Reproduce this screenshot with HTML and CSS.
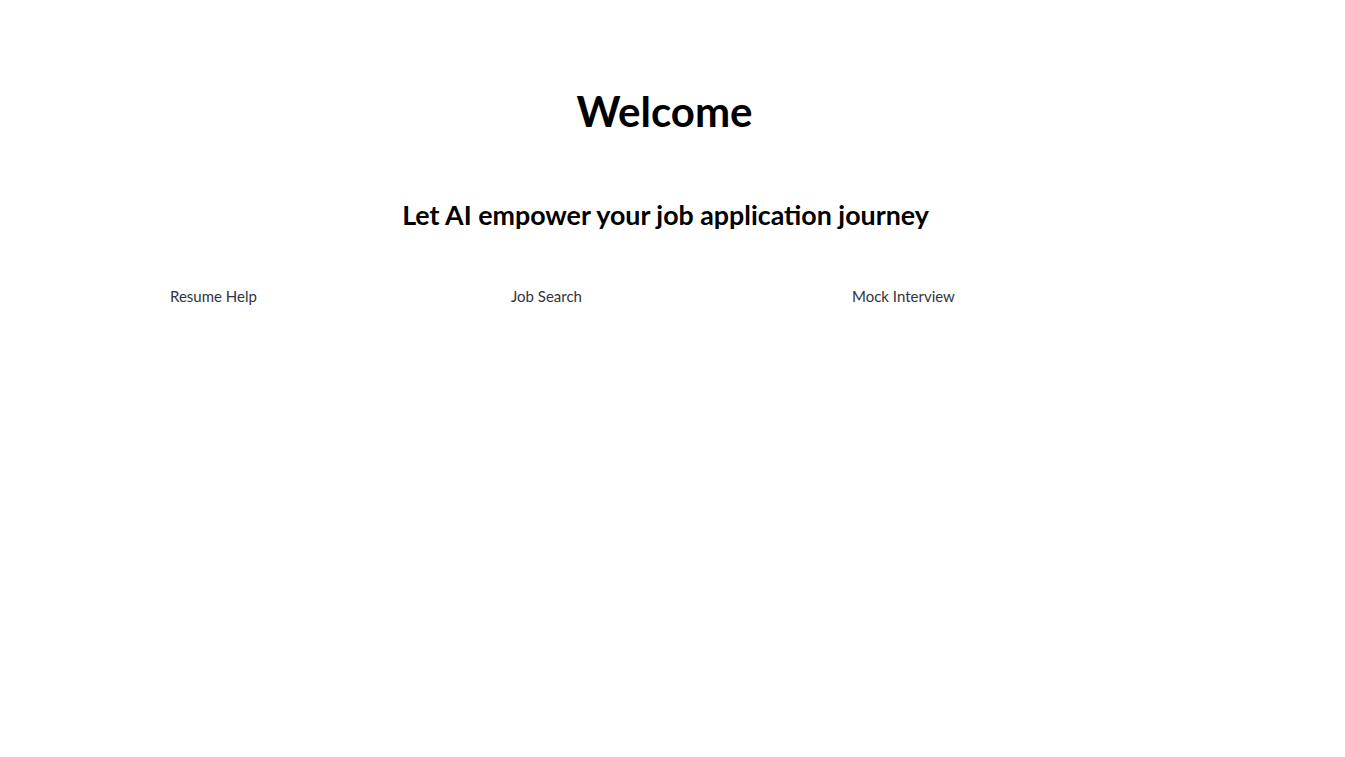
FILE: index.html
```html
<!DOCTYPE html>
<html lang="en">
<head>
<meta charset="utf-8">
<title>Welcome</title>
<link rel="stylesheet" href="styles.css">
</head>
<body>
<main class="page">
  <h1 class="title">Welcome</h1>
  <h3 class="subtitle">Let AI empower your job application journey</h3>
  <div class="cols">
    <div class="col"><a class="link" href="#">Resume Help</a></div>
    <div class="col"><a class="link" href="#">Job Search</a></div>
    <div class="col"><a class="link" href="#">Mock Interview</a></div>
  </div>
</main>
</body>
</html>
```
FILE: styles.css
```css
html, body {
  margin: 0;
  padding: 0;
  background: #ffffff;
}
body {
  font-family: Lato, "Open Sans", sans-serif;
  color: #31333f;
}
.page {
  display: flex;
  flex-direction: column;
  padding: 79px 170px 0 170px;
}
.title {
  margin: 0;
  text-align: center;
  font-size: 42px;
  line-height: 64px;
  font-weight: 700;
  color: #000;
  padding-right: 16px;
}
.subtitle {
  margin: 0;
  margin-top: 52px;
  text-align: center;
  font-size: 26.8px;
  line-height: 40px;
  font-weight: 700;
  color: #000;
  padding-right: 14px;
}
.cols {
  display: grid;
  grid-template-columns: 325px 325px 325px;
  column-gap: 16px;
  margin-top: 49px;
}
.link {
  font-size: 15px;
  line-height: 24px;
  color: #31333f;
  text-decoration: none;
}
```
